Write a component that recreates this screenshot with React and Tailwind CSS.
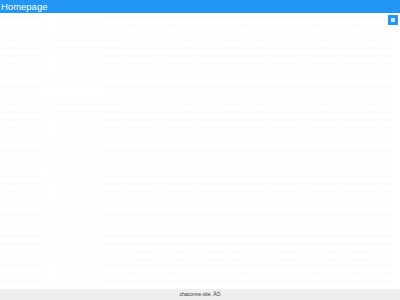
import React from 'react';

const filler = 'o'.repeat(74);

function FaintBlock({ count }) {
  return (
    <div className="flex flex-col">
      {Array.from({ length: count }).map((_, i) => (
        <div key={i} className="flex h-[7.5px] items-center text-[7px] leading-none text-[#fafafb] whitespace-nowrap">
          <span className="w-[52px] shrink-0">xxxxxxxxxxxx</span>
          <span className="w-[52px] shrink-0 h-px bg-[#fbfbfb]"></span>
          <span>{filler}</span>
        </div>
      ))}
    </div>
  );
}

export default function App() {
  return (
    <div className="w-[400px] h-[300px] flex flex-col bg-white overflow-hidden" style={{ fontFamily: '"Liberation Sans", Arial, sans-serif' }}>
      <div className="h-[13px] bg-[#2196f3] flex items-center px-px shrink-0">
        <span className="text-white text-[9.5px] leading-none">Homepage</span>
      </div>
      <div className="relative flex-1 overflow-hidden">
        <div className="flex flex-col gap-[4px] pt-px">
          <FaintBlock count={10} />
          <FaintBlock count={10} />
          <FaintBlock count={15} />
        </div>
        <button className="absolute top-[2px] right-[2px] w-[10px] h-[10px] bg-[#2196f3] flex items-center justify-center">
          <span className="w-[4px] h-[4px] bg-[#cfe6fc]"></span>
        </button>
      </div>
      <div className="h-[11px] bg-[#eeeeee] flex items-center justify-center shrink-0">
        <span className="text-[5px] leading-none text-[#333]">chaconne.site, ÅÖ</span>
      </div>
    </div>
  );
}
